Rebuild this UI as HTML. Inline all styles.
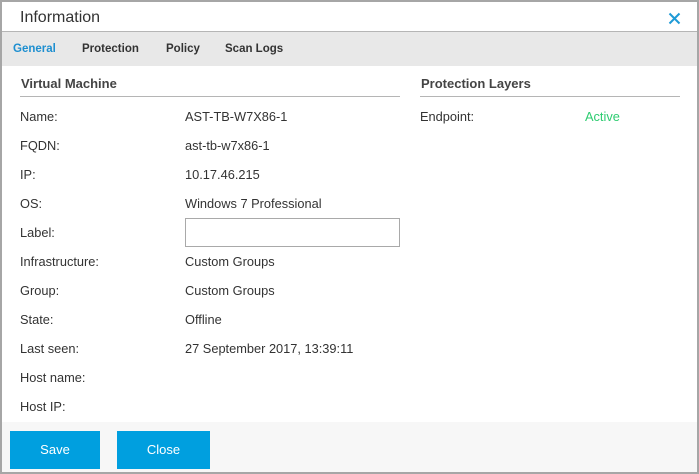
<!DOCTYPE html>
<html><head><style>
*{margin:0;padding:0;box-sizing:border-box}
body{width:699px;height:474px;overflow:hidden;background:#fff;font-family:"Liberation Sans",sans-serif;}
.frame{position:absolute;left:0;top:0;width:699px;height:474px;border:2px solid #a6a6a6;}
.t{position:absolute;white-space:nowrap;}
.title{left:20px;top:9px;font-size:16px;color:#333;}
.x{left:668px;top:12px;}
.hdr{position:absolute;left:2px;top:31px;width:695px;height:1px;background:#b5b5b5;}
.tabs{position:absolute;left:2px;top:32px;width:695px;height:34px;background:#e8e8e8;}
.tab{top:43px;font-size:11.5px;font-weight:bold;color:#333;}
.sec{top:76px;font-size:13px;font-weight:bold;color:#444;}
.line{position:absolute;height:1px;background:#b5b5b5;top:96px;}
.l{left:20px;font-size:12.8px;color:#333;}
.v{left:185px;font-size:12.8px;color:#333;}
.inp{position:absolute;left:185px;top:218px;width:215px;height:29px;border:1px solid #a9a9a9;background:#fff;}
.foot{position:absolute;left:2px;top:422px;width:695px;height:50px;background:#f7f7f7;}
.btn{position:absolute;top:431px;height:38px;background:#009fdf;color:#fff;font-size:13px;text-align:center;line-height:38px;}
</style></head><body>
<div class="t title">Information</div>
<svg class="t x" width="13" height="13" viewBox="0 0 13 13"><path d="M1.5 1.5L11.5 11.5M11.5 1.5L1.5 11.5" stroke="#1e9ad6" stroke-width="2"/></svg>
<div class="hdr"></div>
<div class="tabs"></div>
<div class="t tab" style="left:13px;color:#1e8fd0">General</div>
<div class="t tab" style="left:82px">Protection</div>
<div class="t tab" style="left:166px">Policy</div>
<div class="t tab" style="left:225px">Scan Logs</div>
<div class="t sec" style="left:21px">Virtual Machine</div>
<div class="line" style="left:20px;width:380px"></div>
<div class="t sec" style="left:421px">Protection Layers</div>
<div class="line" style="left:420px;width:260px"></div>
<div class="t l" style="top:109px">Name:</div><div class="t v" style="top:109px">AST-TB-W7X86-1</div>
<div class="t l" style="top:138px">FQDN:</div><div class="t v" style="top:138px">ast-tb-w7x86-1</div>
<div class="t l" style="top:167px">IP:</div><div class="t v" style="top:167px">10.17.46.215</div>
<div class="t l" style="top:196px">OS:</div><div class="t v" style="top:196px">Windows 7 Professional</div>
<div class="t l" style="top:225px">Label:</div><div class="inp"></div>
<div class="t l" style="top:254px">Infrastructure:</div><div class="t v" style="top:254px">Custom Groups</div>
<div class="t l" style="top:283px">Group:</div><div class="t v" style="top:283px">Custom Groups</div>
<div class="t l" style="top:312px">State:</div><div class="t v" style="top:312px">Offline</div>
<div class="t l" style="top:341px">Last seen:</div><div class="t v" style="top:341px">27 September 2017, 13:39:11</div>
<div class="t l" style="top:370px">Host name:</div>
<div class="t l" style="top:399px">Host IP:</div>
<div class="t l" style="left:420px;top:109px">Endpoint:</div>
<div class="t" style="left:585px;top:109px;font-size:12.8px;color:#2ecc71">Active</div>
<div class="foot"></div>
<div class="btn" style="left:10px;width:90px">Save</div>
<div class="btn" style="left:117px;width:93px">Close</div>
<div class="frame"></div>
</body></html>
